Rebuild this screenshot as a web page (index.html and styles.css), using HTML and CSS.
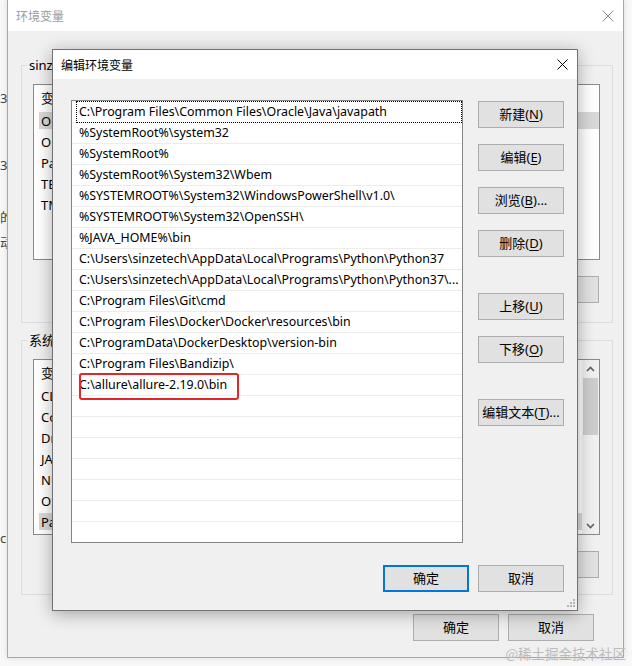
FILE: index.html
```html
<!DOCTYPE html>
<html lang="zh-CN">
<head>
<meta charset="utf-8">
<title>编辑环境变量</title>
<link rel="stylesheet" href="styles.css">
</head>
<body>
<div class="desktop">
  <div class="behind">
    <span class="frag frag1">3</span>
    <span class="frag frag2">36</span>
    <span class="frag frag3">的</span>
    <span class="frag frag4">动</span>
    <span class="frag frag5">c</span>
  </div>

  <section class="window env">
    <header class="titlebar">
      <span class="title">环境变量</span>
      <svg class="close" width="12" height="12" viewBox="0 0 12 12"><path d="M0.5 0.5L11.5 11.5M11.5 0.5L0.5 11.5" stroke="#8c8c8c" stroke-width="1" fill="none"/></svg>
    </header>
    <div class="env-body">
      <fieldset class="group group-user">
        <legend>sinzetech 的用户变量(<u>U</u>)</legend>
        <div class="listview">
          <div class="lv-main">
            <div class="lv-head"><span class="c1">变量</span></div>
            <div class="lv-row sel"><span class="c1">OneDrive</span></div>
            <div class="lv-row"><span class="c1">OneDriveConsumer</span></div>
            <div class="lv-row"><span class="c1">Path</span></div>
            <div class="lv-row"><span class="c1">TEMP</span></div>
            <div class="lv-row"><span class="c1">TMP</span></div>
          </div>
        </div>
        <div class="group-buttons">
          <button class="btn">新建(<u>N</u>)...</button>
          <button class="btn">编辑(<u>E</u>)...</button>
          <button class="btn">删除(<u>D</u>)</button>
        </div>
      </fieldset>

      <fieldset class="group group-sys">
        <legend>系统变量(<u>S</u>)</legend>
        <div class="listview">
          <div class="lv-main">
            <div class="lv-head"><span class="c1">变量</span></div>
            <div class="lv-row"><span class="c1">CLASSPATH</span></div>
            <div class="lv-row"><span class="c1">ComSpec</span></div>
            <div class="lv-row"><span class="c1">DriverData</span></div>
            <div class="lv-row"><span class="c1">JAVA_HOME</span></div>
            <div class="lv-row"><span class="c1">NUMBER_OF_PROCESSORS</span></div>
            <div class="lv-row"><span class="c1">OS</span></div>
            <div class="lv-row sel"><span class="c1">Path</span></div>
          </div>
          <div class="scrollbar">
            <div class="sb-btn"><svg width="9" height="6" viewBox="0 0 9 6"><path d="M1 5L4.5 1.5L8 5" stroke="#606060" stroke-width="1.6" fill="none"/></svg></div>
            <div class="sb-track"><div class="sb-thumb"></div></div>
            <div class="sb-btn"><svg width="9" height="6" viewBox="0 0 9 6"><path d="M1 1L4.5 4.5L8 1" stroke="#606060" stroke-width="1.6" fill="none"/></svg></div>
          </div>
        </div>
        <div class="group-buttons">
          <button class="btn">新建(<u>W</u>)...</button>
          <button class="btn">编辑(<u>I</u>)...</button>
          <button class="btn">删除(<u>L</u>)</button>
        </div>
      </fieldset>

      <div class="dialog-buttons env-buttons">
        <button class="btn">确定</button>
        <button class="btn">取消</button>
      </div>
    </div>
  </section>

  <section class="window edit">
    <header class="titlebar">
      <span class="title">编辑环境变量</span>
      <svg class="close" width="11" height="11" viewBox="0 0 11 11"><path d="M0.5 0.5L10.5 10.5M10.5 0.5L0.5 10.5" stroke="#000" stroke-width="1" fill="none"/></svg>
    </header>
    <div class="edit-body">
      <div class="edit-main">
        <div class="pathlist">
          <div class="path-row focus">C:\Program Files\Common Files\Oracle\Java\javapath</div>
          <div class="path-row">%SystemRoot%\system32</div>
          <div class="path-row">%SystemRoot%</div>
          <div class="path-row">%SystemRoot%\System32\Wbem</div>
          <div class="path-row">%SYSTEMROOT%\System32\WindowsPowerShell\v1.0\</div>
          <div class="path-row">%SYSTEMROOT%\System32\OpenSSH\</div>
          <div class="path-row">%JAVA_HOME%\bin</div>
          <div class="path-row">C:\Users\sinzetech\AppData\Local\Programs\Python\Python37</div>
          <div class="path-row">C:\Users\sinzetech\AppData\Local\Programs\Python\Python37\...</div>
          <div class="path-row">C:\Program Files\Git\cmd</div>
          <div class="path-row">C:\Program Files\Docker\Docker\resources\bin</div>
          <div class="path-row">C:\ProgramData\DockerDesktop\version-bin</div>
          <div class="path-row">C:\Program Files\Bandizip\</div>
          <div class="path-row">C:\allure\allure-2.19.0\bin</div>
          <div class="path-row"></div>
          <div class="path-row"></div>
          <div class="path-row"></div>
          <div class="path-row"></div>
          <div class="path-row"></div>
          <div class="path-row"></div>
          <div class="path-row"></div>
          <div class="annot"></div>
        </div>
        <div class="side-buttons">
          <button class="btn">新建(<u>N</u>)</button>
          <button class="btn">编辑(<u>E</u>)</button>
          <button class="btn">浏览(<u>B</u>)...</button>
          <button class="btn">删除(<u>D</u>)</button>
          <button class="btn sep">上移(<u>U</u>)</button>
          <button class="btn">下移(<u>O</u>)</button>
          <button class="btn sep">编辑文本(<u>T</u>)...</button>
        </div>
      </div>
      <div class="dialog-buttons edit-buttons">
        <button class="btn default">确定</button>
        <button class="btn">取消</button>
      </div>
    </div>
    <svg class="grip" width="9" height="9" viewBox="0 0 9 9">
      <rect x="7" y="1" width="2" height="2" fill="#b5b5b5"/>
      <rect x="4" y="4" width="2" height="2" fill="#b5b5b5"/>
      <rect x="7" y="4" width="2" height="2" fill="#b5b5b5"/>
      <rect x="1" y="7" width="2" height="2" fill="#b5b5b5"/>
      <rect x="4" y="7" width="2" height="2" fill="#b5b5b5"/>
      <rect x="7" y="7" width="2" height="2" fill="#b5b5b5"/>
    </svg>
  </section>

  <div class="watermark">@稀土掘金技术社区</div>
</div>
</body>
</html>
```

FILE: styles.css
```css
* { box-sizing: border-box; }
html, body { margin: 0; padding: 0; }
body {
  width: 632px;
  height: 666px;
  overflow: hidden;
  background: #f8f8f8;
  font-family: "Noto Sans", "Noto Sans CJK SC", sans-serif;
  font-size: 12.4px;
  color: #000;
}
.desktop { position: relative; width: 632px; height: 666px; overflow: hidden; }

/* fragments of the window behind */
.behind {
  position: absolute; left: 0; top: 0; width: 7px; height: 666px;
  overflow: hidden; display: flex; flex-direction: column;
  font-size: 13px; line-height: 16px; color: #444; white-space: nowrap;
}
.frag1 { margin-top: 90px; }
.frag2 { margin-top: 51px; }
.frag3 { margin-top: 36px; }
.frag4 { margin-top: 9px; }
.frag5 { margin-top: 280px; }

/* windows */
.window { position: absolute; display: flex; flex-direction: column; background: #f0f0f0; }
.env {
  left: 7px; top: -1px; width: 617px; height: 659px;
  border: 1px solid #a8a8a8;
  box-shadow: 0 0 6px rgba(0,0,0,0.12);
}
.edit {
  left: 52px; top: 49px; width: 526px; height: 562px;
  border: 1px solid #727272;
  box-shadow: 0 3px 16px rgba(0,0,0,0.32);
}
.titlebar {
  flex: none; display: flex; align-items: center; justify-content: space-between;
  background: #fff;
}
.env .titlebar { height: 31px; padding: 0 9px 0 8px; }
.edit .titlebar { height: 29px; padding: 0 9px 0 8px; }
.title { font-family: "Noto Sans CJK SC", sans-serif; font-size: 12px; line-height: 16px; }
.env .title { color: #9b9b9b; }
.close { display: block; }

/* env body */
.env-body { flex: 1; display: flex; flex-direction: column; padding: 0 10px 0 13px; }
.group {
  margin: 0; min-width: 0;
  border: 1px solid #dcdcdc;
  padding: 11px 12px 19px 11px;
}
.group legend {
  padding: 0 2px; margin-left: -6px;
  font-size: 13px; line-height: 16px;
}
.group-user { margin-top: 26px; }
.group-sys { margin-top: 9px; padding-bottom: 16px; }

.listview {
  display: flex; height: 176px;
  border: 1px solid #8a8a8a; background: #fff; overflow: hidden;
}
.lv-main { flex: 1; min-width: 0; padding-left: 5px; white-space: nowrap; overflow: hidden; font-size: 13px; }
.lv-head { height: 25px; display: flex; align-items: center; }
.lv-row {
  height: 21px; display: flex; align-items: center;
  padding: 2px 0; background-clip: content-box;
}
.lv-row.sel { background-color: #d9d9d9; }
.c1 { width: 170px; flex: none; padding-left: 2px; }

.scrollbar { width: 17px; flex: none; display: flex; flex-direction: column; background: #f0f0f0; }
.sb-btn { height: 17px; display: flex; align-items: center; justify-content: center; }
.sb-btn svg { display: block; }
.sb-track { flex: 1; }
.sb-thumb { height: 57px; margin: 1px 1px 0; background: #cdcdcd; }

.group-buttons { display: flex; justify-content: flex-end; gap: 9px; margin-top: 16px; padding-right: 1px; }

.btn {
  width: 86px; height: 27px; padding: 0;
  border: 1px solid #adadad; background: #e1e1e1;
  font-family: "Noto Sans", "Noto Sans CJK SC", sans-serif; font-size: 13px; color: #000;
  line-height: 1; display: flex; align-items: center; justify-content: center;
  white-space: nowrap;
}
.btn u { text-underline-offset: 2px; }
.btn.default { border: 2px solid #0078d7; }

.dialog-buttons { display: flex; justify-content: flex-end; gap: 9px; }
.env-buttons { margin-top: 19px; margin-right: 19px; }

/* edit body */
.edit-body { flex: 1; display: flex; flex-direction: column; padding: 21px 13px 0 18px; }
.edit-main { display: flex; gap: 15px; }
.pathlist {
  position: relative;
  width: 392px; height: 443px; flex: none;
  border: 1px solid #858585; background: #fff; overflow: hidden;
  padding-top: 1px;
}
.path-row {
  height: 21px; border-bottom: 1px solid #ececec;
  padding-left: 7px; line-height: 20px;
  white-space: nowrap; overflow: hidden;
}
.path-row.focus { position: relative; overflow: visible; }
.path-row.focus::after {
  content: ""; position: absolute; left: 4px; right: 0; top: -1px; bottom: -1px;
  border: 1px dotted #000;
}
.annot {
  position: absolute; left: 7px; top: 272px; width: 160px; height: 27px;
  border: 2px solid #e4252b; border-radius: 3px;
}
.side-buttons { display: flex; flex-direction: column; gap: 16px; padding-top: 1px; }
.side-buttons .sep { margin-top: 20px; }
.edit-buttons { margin-top: 22px; }

.grip { position: absolute; right: 2px; bottom: 3px; }

.watermark {
  position: absolute; right: 6px; bottom: 5px;
  font-family: "Noto Sans CJK SC", sans-serif; font-size: 13.5px; line-height: 16px;
  color: #bcbcbc;
}
```
